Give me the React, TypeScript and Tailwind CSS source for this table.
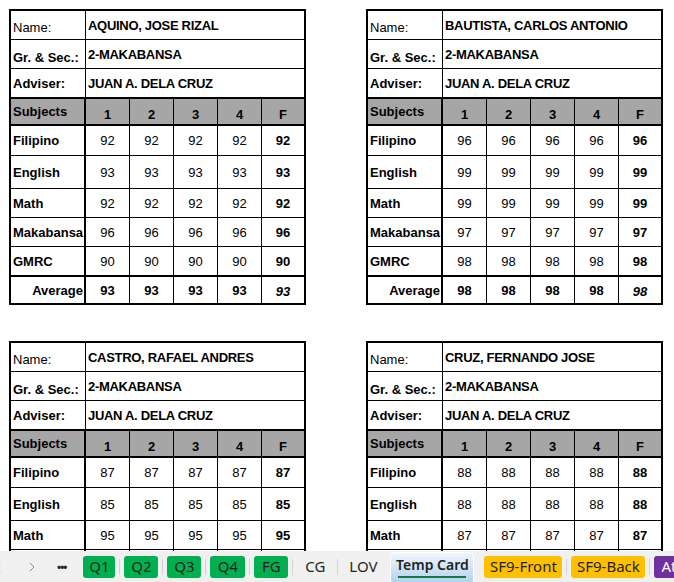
import { ChevronLeft, ChevronRight } from "lucide-react";

type Card = {
  name: string;
  grades: number[];
  avg: number;
};

const CARDS: Card[] = [
  { name: "AQUINO, JOSE RIZAL", grades: [92, 93, 92, 96, 90], avg: 93 },
  { name: "BAUTISTA, CARLOS ANTONIO", grades: [96, 99, 99, 97, 98], avg: 98 },
  { name: "CASTRO, RAFAEL ANDRES", grades: [87, 85, 95, 90, 92], avg: 90 },
  { name: "CRUZ, FERNANDO JOSE", grades: [88, 88, 87, 89, 90], avg: 88 },
];

const SUBJECTS = ["Filipino", "English", "Math", "Makabansa", "GMRC"];
const ROW_CLASS = [
  "h-[30px] border-b",
  "h-[33px] border-b",
  "h-[29px] border-b",
  "h-[29px] border-b",
  "h-[30px] border-b-2",
];

function InfoRow({ label, value, h, labelPad }: { label: string; value: string; h: string; labelPad: string }) {
  return (
    <div className={`flex border-black ${h}`}>
      <div className={`flex w-[75px] shrink-0 items-center border-r border-black pl-[2px] ${labelPad}`}>{label}</div>
      <div className="flex flex-1 items-center pl-[2px] font-bold tracking-[-0.3px]">{value}</div>
    </div>
  );
}

function GradeCard({ card }: { card: Card }) {
  const cell = "flex w-[44px] shrink-0 items-center justify-center border-r border-black";
  const last = "flex flex-1 items-center justify-center";
  return (
    <div className="w-[297px] border-2 border-black bg-white text-[13px] leading-[15px] text-black">
      <InfoRow label="Name:" value={card.name} h="h-[29px] border-b" labelPad="pt-[5px]" />
      <InfoRow label="Gr. & Sec.:" value="2-MAKABANSA" h="h-[29px] border-b" labelPad="pt-[7px] font-bold" />
      <InfoRow label="Adviser:" value="JUAN A. DELA CRUZ" h="h-[30px] border-b-2" labelPad="font-bold" />

      <div className="flex h-[27px] border-b-2 border-black bg-[#a6a6a6] font-bold">
        <div className="flex w-[75px] shrink-0 items-center border-r-2 border-black pl-[2px]">Subjects</div>
        {["1", "2", "3", "4"].map((q) => (
          <div key={q} className={`${cell} pt-[6px]`}>
            {q}
          </div>
        ))}
        <div className={`${last} pt-[6px]`}>F</div>
      </div>

      {SUBJECTS.map((s, i) => (
        <div key={s} className={`flex border-black ${ROW_CLASS[i]}`}>
          <div className="flex w-[75px] shrink-0 items-center border-r-2 border-black pl-[2px] font-bold">{s}</div>
          {[0, 1, 2, 3].map((q) => (
            <div key={q} className={cell}>
              {card.grades[i]}
            </div>
          ))}
          <div className={`${last} font-bold`}>{card.grades[i]}</div>
        </div>
      ))}

      <div className="flex h-[26px] font-bold">
        <div className="flex w-[75px] shrink-0 items-center justify-end border-r-2 border-black pr-[1px]">Average</div>
        {[0, 1, 2, 3].map((q) => (
          <div key={q} className={cell}>
            {card.avg}
          </div>
        ))}
        <div className={`${last} pt-[2px] italic`}>{card.avg}</div>
      </div>
    </div>
  );
}

function Sep() {
  return <div className="mx-[4px] h-[16px] w-px shrink-0 bg-[#d4d4d4]" />;
}

function Tab({ label, bg, w }: { label: string; bg: string; w: string }) {
  return (
    <div className={`flex h-[22px] shrink-0 items-center justify-center rounded-[3px] leading-none ${bg} ${w}`}>
      {label}
    </div>
  );
}

export default function App() {
  return (
    <div className="flex h-[582px] w-[674px] flex-col overflow-hidden bg-white font-['Liberation_Sans',Arial,sans-serif]">
      <div className="h-[551px] overflow-hidden pl-[9px] pt-[9px]">
        <div className="grid grid-cols-[297px_297px] gap-x-[60px] gap-y-[36px]">
          {CARDS.map((c) => (
            <GradeCard key={c.name} card={c} />
          ))}
        </div>
      </div>

      <div className="flex h-[31px] items-center overflow-hidden bg-[#f0f0f0] font-['Noto_Sans',sans-serif] text-[15px] text-[#1f1f1f]">
        <ChevronLeft size={16} strokeWidth={1.5} className="-ml-[10px] shrink-0 text-[#8a8a8a]" />
        <ChevronRight size={16} strokeWidth={1.5} className="ml-[18px] shrink-0 text-[#8a8a8a]" />
        <span className="ml-[17px] shrink-0 text-[11px] font-bold leading-none tracking-[-1px]">•••</span>
        <div className="ml-[17px] flex items-center">
          <Tab label="Q1" bg="bg-[#00b050]" w="w-[32px]" />
          <Sep />
          <Tab label="Q2" bg="bg-[#00b050]" w="w-[34px]" />
          <Sep />
          <Tab label="Q3" bg="bg-[#00b050]" w="w-[34px]" />
          <Sep />
          <Tab label="Q4" bg="bg-[#00b050]" w="w-[35px]" />
          <Sep />
          <Tab label="FG" bg="bg-[#00b050]" w="w-[34px]" />
          <Sep />
          <Tab label="CG" bg="" w="w-[36px]" />
          <Sep />
          <Tab label="LOV" bg="" w="w-[42px]" />
          <div className="ml-[6px] flex h-[30px] w-[84px] shrink-0 flex-col items-center justify-center self-end rounded-t-[5px] border border-b-0 border-white bg-gradient-to-b from-[#eef5fc] to-[#b4d3f0] text-[14px] font-semibold">
            <span className="leading-[18px]">Temp Card</span>
            <span className="mt-[2px] h-[2px] w-[68px] bg-[#107c41]" />
          </div>
          <div className="ml-[10px]" />
          <Tab label="SF9-Front" bg="bg-[#ffc000]" w="w-[78px]" />
          <Sep />
          <Tab label="SF9-Back" bg="bg-[#ffc000]" w="w-[74px]" />
          <Sep />
          <div className="flex h-[22px] w-[40px] shrink-0 items-center rounded-[3px] bg-[#7030a0] pl-[7px] leading-none text-white">
            Attendance
          </div>
        </div>
      </div>
    </div>
  );
}
